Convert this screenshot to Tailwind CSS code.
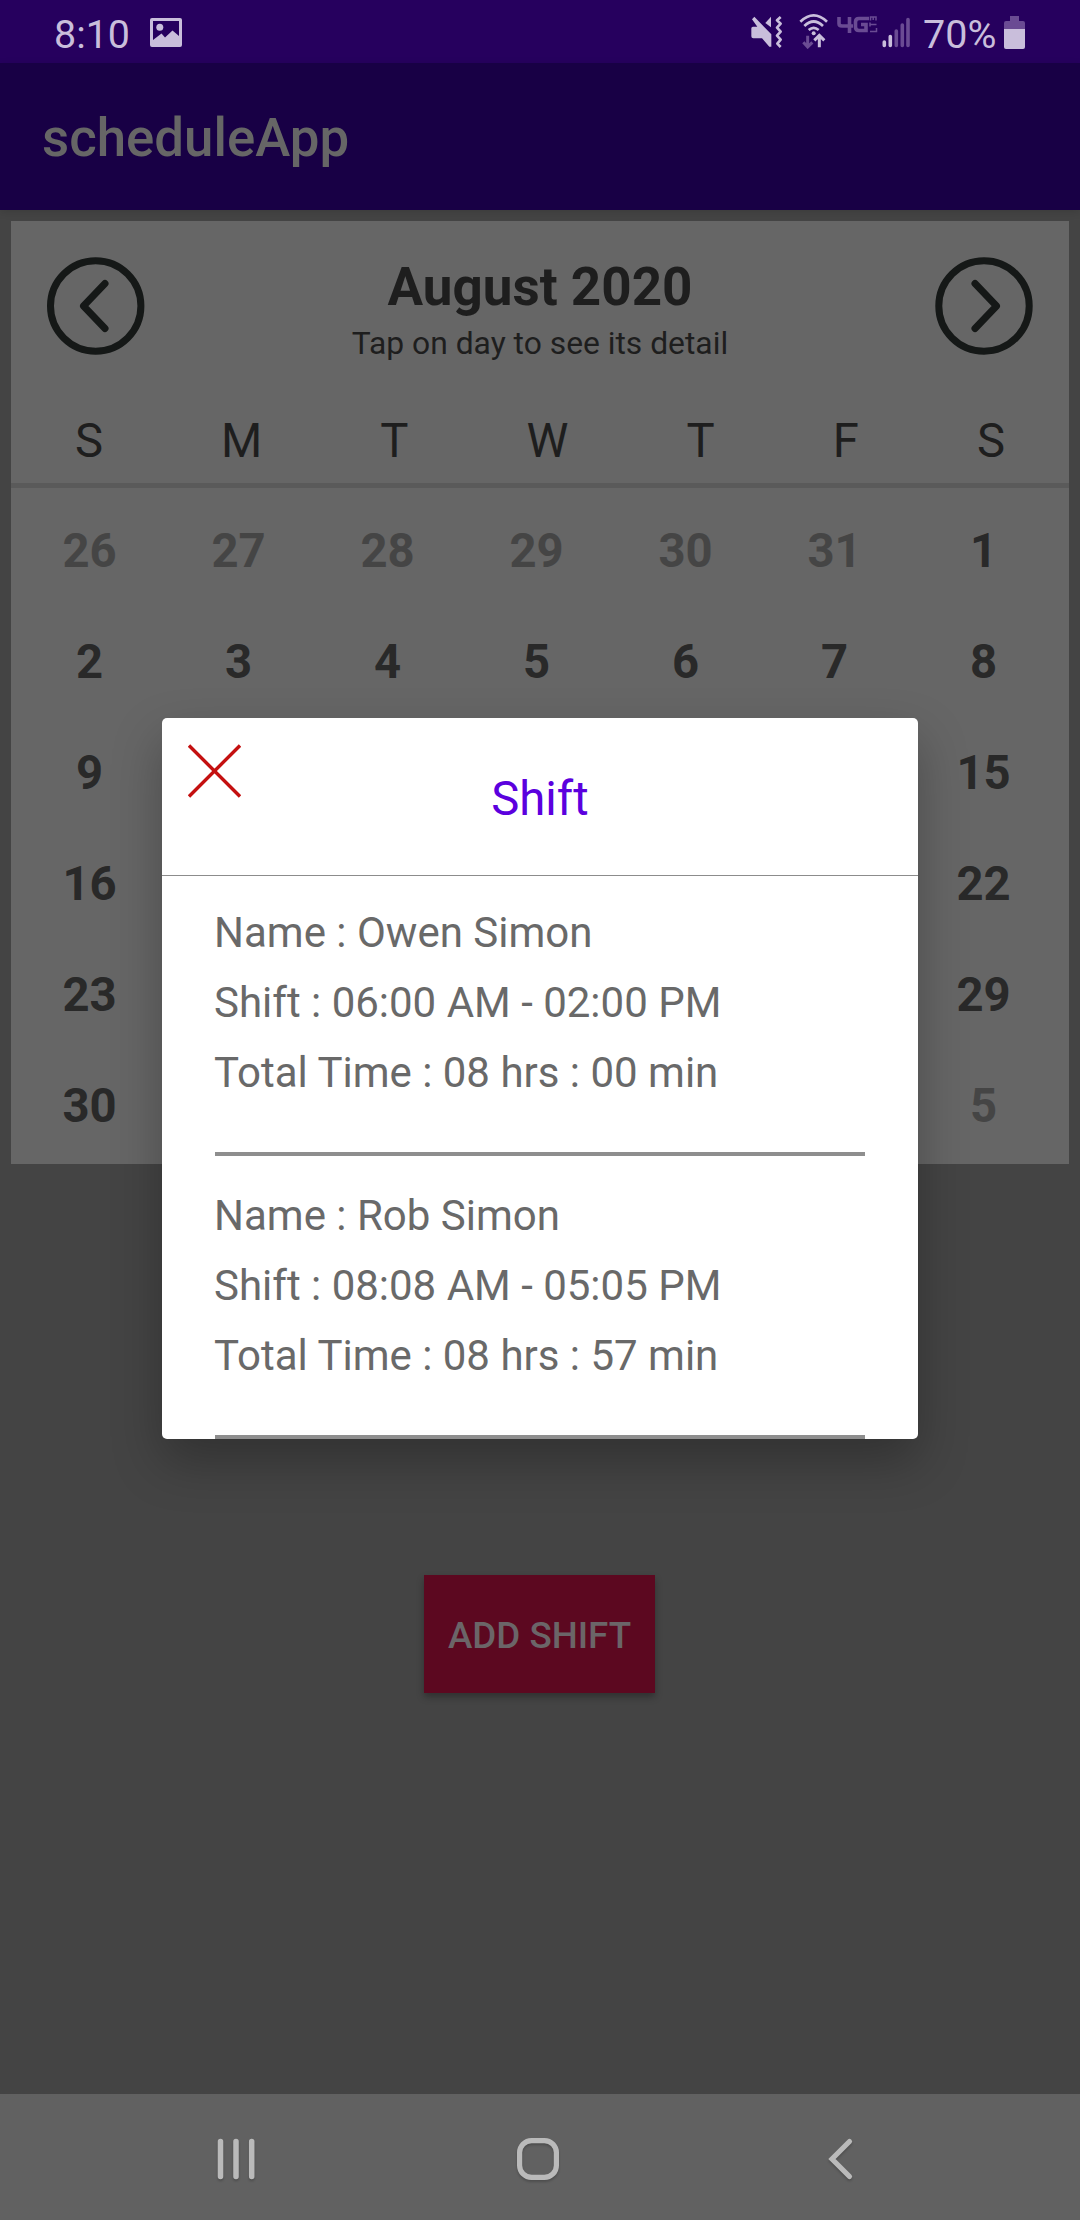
<!DOCTYPE html>
<html lang="en">
<head>
<meta charset="utf-8">
<title>scheduleApp</title>
<script src="https://cdn.jsdelivr.net/npm/@tailwindcss/browser@4"></script>
</head>
<body class="bg-[#444444]">
<div class="relative flex h-[2220px] w-[1080px] flex-col overflow-hidden font-['Roboto',sans-serif]">

  <!-- Status bar -->
  <div class="flex h-[63px] items-start bg-[#26005e] pl-[54px] pr-[55px] text-[#c9bedb]">
    <span class="w-[96px] pt-[6px] text-[39.4px] leading-[57px]">8:10</span>
    <svg class="mt-[18px]" width="32" height="29" viewBox="0 0 32 29" fill="currentColor"><path fill-rule="evenodd" d="M2 0H30Q32 0 32 2V27Q32 29 30 29H2Q0 29 0 27V2Q0 0 2 0ZM3 3V22L11.500 15.500L15 19.500L22.500 12.500L29 18V3Z"/><circle cx="9.800" cy="9.300" r="3.500"/></svg>
    <div class="ml-auto flex">
      <svg class="mt-[15px]" width="33" height="34" viewBox="87 45 99 102"><g fill="#c9bedb"><path d="M90 80H106L90 58L97 50L148 103V140H142L120 115H94Q88 115 88 109V85Q88 80 93 80Z"/><path d="M130 69L147 50V82Z"/></g><path d="M176 51L165 61L176 71L165 83L176 95L165 107L176 119L166 131L176 141" fill="none" stroke="#c9bedb" stroke-width="8" stroke-linejoin="round"/></svg>
      <svg class="ml-[15px] mt-[13px]" width="30" height="36" viewBox="235 39 90 108"><g fill="none" stroke="#c9bedb" stroke-width="8"><path d="M239 65Q279 27 319 65"/><path d="M251 78Q279 51 307 78"/><path d="M264 90Q279 77 294 90"/></g><circle cx="279" cy="100" r="6" fill="#c9bedb"/><path d="M261 107V141M248 127L261 141L275 127" fill="none" stroke="#6a4b93" stroke-width="9"/><path d="M296 142V107M281 121L296 106L311 121" fill="none" stroke="#c9bedb" stroke-width="9"/></svg>
      <!-- Network badge -->
      <svg class="ml-[8px] mt-[16px]" width="41" height="20" viewBox="0 0 41 20" fill="none" stroke="#6a4b93"><path d="M2 1V7.500Q2 10 5 10H16M12.500 1V17M32 2.500H22Q18.500 2.500 18.500 6V11Q18.500 14.500 22 14.500H29V8.500H24" stroke-width="3.600"/><path d="M39.500 12V15.500H33M33 8.500H39.500M33 6.500V10.500M33.500 4.500V1H39V4.500M36.200 1V4" stroke-width="1.500"/></svg>
      <svg class="ml-[4px] mt-[17px]" width="28" height="31" viewBox="0 0 28 31" stroke-width="3.600" stroke-linecap="round"><path d="M2.300 25V28.500M8.300 19.500V28.500" stroke="#c9bedb"/><path d="M14.300 14V28.500M20.300 8V28.500M26 2.500V28.500" stroke="#6a4b93"/></svg>
      <span class="ml-[13px] w-[81px] pt-[6px] text-[39.5px] leading-[57px]">70%</span>
      <svg class="mt-[16px]" width="21" height="33" viewBox="0 0 21 33"><path d="M6 0H15V5H19Q21 5 21 7V13H0V7Q0 5 2 5H6Z" fill="#6a4b93"/><path d="M0 13H21V31Q21 33 19 33H2Q0 33 0 31Z" fill="#c9bedb"/></svg>
    </div>
  </div>

  <!-- App bar -->
  <header class="flex h-[147px] items-center bg-[#180045] pl-[42px] pt-[5px] text-[52.8px] font-medium text-[#666666] shadow-[0_2px_8px_rgba(0,0,0,0.12)]">scheduleApp</header>

  <!-- Calendar -->
  <main class="mx-[11px] mt-[11px] h-[943px] shrink-0 bg-[#666666] text-[#1e1e1e]">
    <div class="flex h-[192px] items-start justify-between px-[35px] pt-[35px]">
      <svg width="100" height="100" viewBox="0 0 100 100" fill="none" stroke="#151817" stroke-width="7"><circle cx="49.700" cy="50" r="45.200"/><path d="M59 27.500L37.500 50L59 72.500" stroke-width="7" stroke-linecap="round" stroke-linejoin="round"/></svg>
      <div class="flex flex-col items-center gap-[7px]">
        <h1 class="text-[53px] font-bold leading-[62px]">August 2020</h1>
        <p class="text-[31.8px] leading-[37px]">Tap on day to see its detail</p>
      </div>
      <svg width="100" height="100" viewBox="0 0 100 100" fill="none" stroke="#151817" stroke-width="7"><circle cx="50" cy="50" r="45.200"/><path d="M41 27.500L62.500 50L41 72.500" stroke-width="7" stroke-linecap="round" stroke-linejoin="round"/></svg>
    </div>
    <div class="flex h-[70px] px-[5px] text-center text-[47.25px] leading-[56px]">
      <span class="flex-auto">S</span><span class="flex-auto">M</span><span class="flex-auto">T</span><span class="flex-auto">W</span><span class="flex-auto">T</span><span class="flex-auto">F</span><span class="flex-auto">S</span>
    </div>
    <div class="h-[5px] bg-[#5a5a5a]"></div>
    <div id="days" class="grid grid-cols-[repeat(7,149px)] pl-[4px] pt-[8px] text-center text-[47.25px] font-bold leading-[111px] text-[#292929]"></div>
  </main>

  <!-- Add button -->
  <button class="mt-[411px] h-[118px] w-[231px] shrink-0 self-center bg-[#5c0820] pt-[4px] text-[36.75px] font-medium text-[#6b6568] shadow-[0_4px_7px_rgba(0,0,0,0.3)] ml-[-1px]">ADD SHIFT</button>

  <!-- Navigation bar -->
  <nav class="mt-auto flex h-[126px] shrink-0 items-center bg-[#616161] pl-[214px] pt-[4px]">
    <svg class="drop-shadow-[0_2px_1px_rgba(0,0,0,0.2)]" width="44" height="48" viewBox="0 0 44 48" stroke="#bababa" stroke-width="5.500" stroke-linecap="round"><path d="M6.500 6.500V41.500M22 6.500V41.500M37.700 6.500V41.500"/></svg>
    <svg class="ml-[256px] drop-shadow-[0_2px_1px_rgba(0,0,0,0.2)]" width="48" height="48" viewBox="0 0 48 48" fill="none" stroke="#bababa" stroke-width="5.200"><rect x="5.600" y="5.600" width="36.800" height="36.800" rx="12"/></svg>
    <svg class="ml-[262px] drop-shadow-[0_2px_1px_rgba(0,0,0,0.2)]" width="36" height="48" viewBox="0 0 36 48" fill="none" stroke="#bababa" stroke-width="5.200" stroke-linecap="round"><path d="M25.500 6.500L8 24L25.500 41.500"/></svg>
  </nav>

  <!-- Shift dialog -->
  <section class="absolute left-[162px] top-[718px] h-[721px] w-[756px] overflow-hidden rounded-[5px] bg-white shadow-[0_22px_50px_rgba(0,0,0,0.28)]">
    <div class="relative h-[158px] border-b border-[#8c8c8c] pt-[53px] text-center text-[47.25px] leading-[56px] text-[#5b00de]">
      <svg class="absolute left-[26px] top-[26px]" width="53" height="54" viewBox="0 0 53 54" stroke="#c41010" stroke-width="3.400"><path d="M1 1.500L52 52.500M52 1.500L1 52.500"/></svg>
      <h2>Shift</h2>
    </div>
    <div class="mx-[53px] pt-[22px] text-[42px] leading-[70px] text-[#696969]">
      <div class="h-[258px] border-b-4 border-[#8e8e8e]">
        <p class="-ml-px">Name : Owen Simon</p>
        <p class="-ml-px">Shift : 06:00 AM - 02:00 PM</p>
        <p class="-ml-px">Total Time : 08 hrs : 00 min</p>
      </div>
      <div class="h-[283px] border-b-4 border-[#8e8e8e] pt-[25px]">
        <p class="-ml-px">Name : Rob Simon</p>
        <p class="-ml-px">Shift : 08:08 AM - 05:05 PM</p>
        <p class="-ml-px">Total Time : 08 hrs : 57 min</p>
      </div>
    </div>
  </section>
</div>
<script>
  // Six calendar weeks, starting on Sunday 26 July 2020
  const grid = document.getElementById('days');
  for (let i = 0; i < 42; i++) {
    const date = new Date(2020, 6, 26 + i);
    const cell = document.createElement('span');
    // Weekdays from the third row on lie behind the open dialog
    const covered = i >= 14 && i % 7 > 0 && i % 7 < 6;
    if (!covered) cell.textContent = date.getDate();
    if (date.getMonth() !== 7) cell.className = 'text-[#454545]';
    grid.appendChild(cell);
  }
</script>
</body>
</html>
